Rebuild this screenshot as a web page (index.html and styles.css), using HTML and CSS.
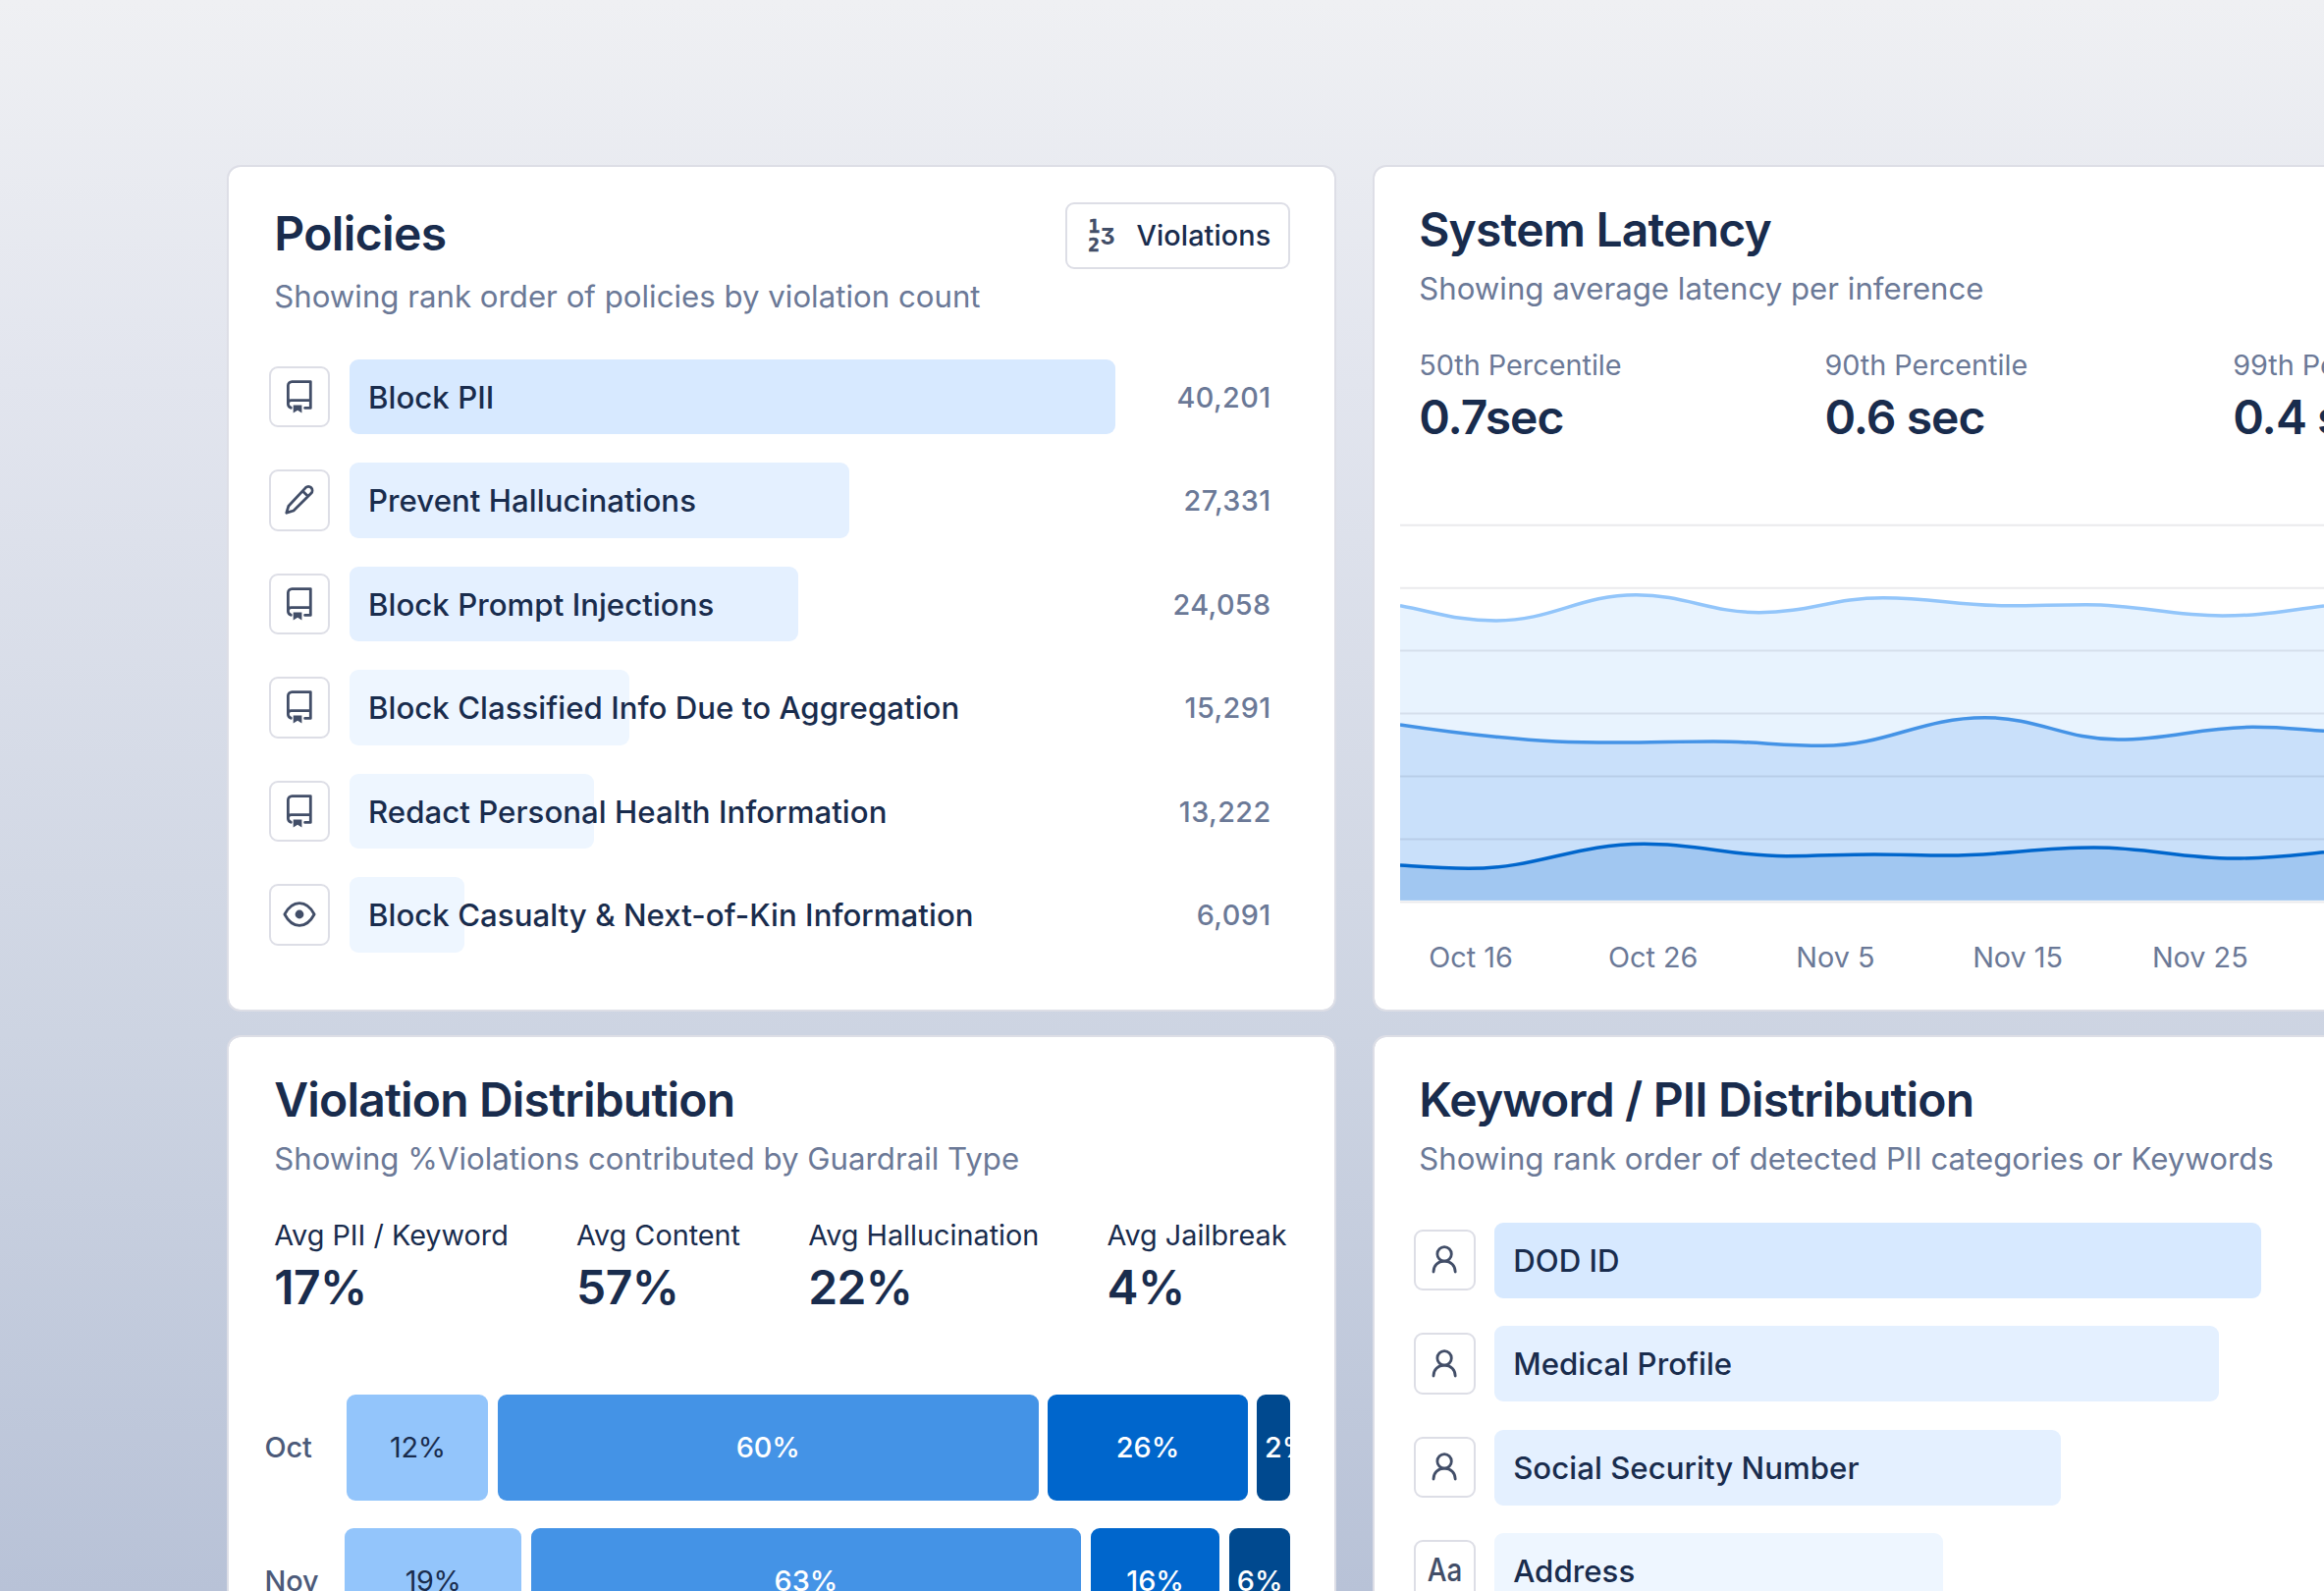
FILE: index.html
```html
<!DOCTYPE html>
<html lang="en">
<head>
<meta charset="utf-8">
<title>Guardrail dashboard</title>
<link rel="stylesheet" href="styles.css">
</head>
<body>
<svg class="sprite" aria-hidden="true">
  <symbol id="i-repo" viewBox="0 0 38 38">
    <path class="ln" d="M10.3 30.2C8.5 29.6 7.4 28 7.4 26.3V7.6a4 4 0 0 1 4-4H30.3V30.4H24.6M7.4 25.8a3.2 3.2 0 0 1 3.2-3.2H30.3"/>
    <path class="fl" d="M12.7 27.4h8.7v8.2l-4.3-2.8-4.4 2.8z"/>
  </symbol>
  <symbol id="i-pencil" viewBox="0 0 38 38">
    <path class="ln" d="M5.8 32.2 7.9 25.2 25.3 6.600a3.900 3.900 0 0 1 5.600 5.600L13 30z M22.200 9.900l5.400 5.400"/>
  </symbol>
  <symbol id="i-eye" viewBox="0 0 38 38">
    <path class="ln" d="M3.9 19C8 11.2 13 7.7 19 7.7S30 11.2 34.1 19C30 26.8 25 30.3 19 30.3S8 26.8 3.9 19z"/>
    <circle class="fl" cx="19" cy="19" r="4.4"/>
  </symbol>
  <symbol id="i-person" viewBox="0 0 38 38">
    <circle class="ln" cx="19.1" cy="12.9" r="7.2"/>
    <path class="ln" d="M8 31C8 24.6 12.5 20.2 19.1 20.2S30.2 24.6 30.2 31"/>
  </symbol>
</svg>

<main class="board">
  <section class="card policies">
    <header class="head">
      <div class="heading">
        <h2 class="title">Policies</h2>
        <p class="sub">Showing rank order of policies by violation count</p>
      </div>
      <button class="btn"><svg class="btn-ico" viewBox="0 0 38 38"><text class="n1" x="5.5" y="16.2">1</text><text class="n1" x="5.3" y="35.4">2</text><text class="n3" x="17.5" y="27.5">3</text></svg><span>Violations</span></button>
    </header>
    <ul class="rank">
      <li class="row"><span class="box"><svg><use href="#i-repo"/></svg></span><span class="track"><span class="bar b1" style="width:780.6px">Block PII</span></span><span class="num">40,201</span></li>
      <li class="row"><span class="box"><svg><use href="#i-pencil"/></svg></span><span class="track"><span class="bar b2" style="width:509.6px">Prevent Hallucinations</span></span><span class="num">27,331</span></li>
      <li class="row"><span class="box"><svg><use href="#i-repo"/></svg></span><span class="track"><span class="bar b2" style="width:457.4px">Block Prompt Injections</span></span><span class="num">24,058</span></li>
      <li class="row"><span class="box"><svg><use href="#i-repo"/></svg></span><span class="track"><span class="bar b3" style="width:284.8px">Block Classified Info Due to Aggregation</span></span><span class="num">15,291</span></li>
      <li class="row"><span class="box"><svg><use href="#i-repo"/></svg></span><span class="track"><span class="bar b3" style="width:248.8px">Redact Personal Health Information</span></span><span class="num">13,222</span></li>
      <li class="row"><span class="box"><svg><use href="#i-eye"/></svg></span><span class="track"><span class="bar b3" style="width:116.8px">Block Casualty &amp; Next-of-Kin Information</span></span><span class="num">6,091</span></li>
    </ul>
  </section>

  <section class="card latency">
    <h2 class="title">System Latency</h2>
    <p class="sub">Showing average latency per inference</p>
    <div class="metrics">
      <div><div class="m-label">50th Percentile</div><div class="m-value">0.7sec</div></div>
      <div><div class="m-label">90th Percentile</div><div class="m-value">0.6 sec</div></div>
      <div><div class="m-label">99th Percentile</div><div class="m-value">0.4 sec</div></div>
    </div>
    <svg class="chart" id="chart" viewBox="0 0 941 387"></svg>
    <div class="axis"><span>Oct 16</span><span>Oct 26</span><span>Nov 5</span><span>Nov 15</span><span>Nov 25</span></div>
  </section>

  <section class="card violations">
    <h2 class="title">Violation Distribution</h2>
    <p class="sub">Showing %Violations contributed by Guardrail Type</p>
    <div class="metrics">
      <div><div class="m-label">Avg PII / Keyword</div><div class="m-value">17%</div></div>
      <div><div class="m-label">Avg Content</div><div class="m-value">57%</div></div>
      <div><div class="m-label">Avg Hallucination</div><div class="m-value">22%</div></div>
      <div><div class="m-label">Avg Jailbreak</div><div class="m-value">4%</div></div>
    </div>
    <div class="stacks">
      <div class="stack"><span class="month">Oct</span><span class="seg s1" style="width:144px">12%</span><span class="seg s2" style="width:551px">60%</span><span class="seg s3" style="width:203.6px">26%</span><span class="seg s4" style="width:34px">2%</span></div>
      <div class="stack"><span class="month">Nov</span><span class="seg s1" style="width:180px">19%</span><span class="seg s2" style="width:560.6px">63%</span><span class="seg s3" style="width:131.7px">16%</span><span class="seg s4" style="width:62.5px">6%</span></div>
    </div>
  </section>

  <section class="card keywords">
    <h2 class="title">Keyword / PII Distribution</h2>
    <p class="sub">Showing rank order of detected PII categories or Keywords</p>
    <ul class="rank">
      <li class="row"><span class="box"><svg><use href="#i-person"/></svg></span><span class="track"><span class="bar b1" style="width:780.6px">DOD ID</span></span></li>
      <li class="row"><span class="box"><svg><use href="#i-person"/></svg></span><span class="track"><span class="bar b2" style="width:737.6px">Medical Profile</span></span></li>
      <li class="row"><span class="box"><svg><use href="#i-person"/></svg></span><span class="track"><span class="bar b2" style="width:577px">Social Security Number</span></span></li>
      <li class="row"><span class="box"><svg viewBox="0 0 38 38"><text class="aa" x="1.8" y="29.2" textLength="35.6" lengthAdjust="spacingAndGlyphs">Aa</text></svg></span><span class="track"><span class="bar b3" style="width:456.6px">Address</span></span></li>
    </ul>
  </section>
</main>
<script src="chart.js"></script>
</body>
</html>
```
FILE: chart.js
```js
// Latency series as [x, y, slope] knots, joined with cubic segments.
const series = [
  { name: 'p50', pts: [[0,83.7,.19],[97.5,99,0],[240.5,72.7,0],[365.7,90.7,0],[492,75.7,0],[618.5,83.7,0],[698.7,82.7,0],[837.5,94,0],[941,84,-.12]] },
  { name: 'p90', pts: [[0,205,.15],[97.5,217.3,.1],[220.8,223,0],[319.4,222,0],[430.5,226.3,0],[595.7,197.7,0],[731.4,220,0],[868.3,207.3,0],[941,211.3,.07]] },
  { name: 'p99', pts: [[0,348,.07],[69.7,351.3,0],[248.5,326.3,0],[393.4,338.7,0],[483,337,0],[557,338,0],[706.7,330,0],[849.8,341,0],[941,334.7,-.1]] },
];
const base = 383.7;
const curve = pts => pts.map(([x, y, m], i) => {
  if (!i) return `M${x} ${y}`;
  const [px, py, pm] = pts[i - 1], h = (x - px) * 0.4;
  return `C${px + h} ${py + pm * h} ${x - h} ${y - m * h} ${x} ${y}`;
}).join('');
const grid = [0, 1, 2, 3, 4, 5, 6].map(i => `<path class="grid" d="M0 ${1.7 + i * 63.95}H941"/>`).join('');
document.getElementById('chart').innerHTML =
  series.map(s => `<path class="area ${s.name}" d="${curve(s.pts)}V${base}H0Z"/>`).join('') + grid +
  series.map(s => `<path class="line ${s.name}" d="${curve(s.pts)}"/>`).join('');
```
FILE: styles.css
```css
* { box-sizing: border-box; }
body {
  margin: 0;
  width: 2367px;
  height: 1620px;
  overflow: hidden;
  background: linear-gradient(180deg, #eff0f3 0%, #e2e5ee 24%, #cdd4e2 65%, #b8c2d7 100%);
  font-family: Inter, "Liberation Sans", sans-serif;
  color: #192c4d;
}
.sprite { display: none; }
.board {
  display: grid;
  grid-template-columns: 1130px 1130px;
  grid-template-rows: 861.6px 861.6px;
  gap: 24.4px 36.6px;
  width: 2367px;
  height: 1620px;
  overflow: hidden;
  padding: 168.4px 0 0 231px;
}
.card {
  border: 2.4px solid #dddee6;
  border-radius: 14px;
  background: #fff;
  background-clip: padding-box;
  padding: 34px 44.6px 0 45.6px;
  overflow: hidden;
}
.policies, .violations { padding-left: 46.2px; }
.title, .sub, .rank { margin: 0; padding: 0; }
.title { font-size: 48px; line-height: 60px; font-weight: 600; letter-spacing: -0.82px; }
.sub { font-size: 31.2px; line-height: 40px; color: #6b7997; margin-top: 10px; white-space: nowrap; letter-spacing: 0.01px; }

.head { display: flex; justify-content: space-between; align-items: flex-start; padding-top: 1.4px; }
.heading { padding-top: 2.6px; }
.heading .title { letter-spacing: -0.6px; }
.heading .sub { margin: 13.8px 0 -0.9px; }
.btn {
  display: flex;
  align-items: center;
  height: 68px;
  width: 229px;
  padding: 1px 18px 0 16px;
  justify-content: space-between;
  border: 2.4px solid #dddee6;
  border-radius: 9px;
  background: #fff;
  color: inherit;
  font: 500 28.8px/36px Inter, sans-serif;
  letter-spacing: 0.1px;
}
.btn-ico { width: 38px; height: 38px; fill: #424e68; }
.n1 { font: 700 19.4px "DejaVu Sans Mono", monospace; stroke: #424e68; stroke-width: 0.6px; }
.n3 { font: 700 23.4px Inter, sans-serif; font-feature-settings: "cv09"; }
.aa { font: 500 33px Inter, sans-serif; fill: #424e68; }

.rank { list-style: none; display: flex; flex-direction: column; gap: 28.7px; margin: 44.3px 0 0 -5px; }
.policies .rank { margin-left: -5.2px; }
.row { display: flex; align-items: center; height: 76.8px; }
.box {
  flex: none;
  display: grid;
  place-items: center;
  width: 62.4px;
  height: 62.4px;
  border: 2.4px solid #dddee6;
  border-radius: 9px;
  margin-right: 19.4px;
}
.box svg { width: 38px; height: 38px; overflow: visible; }
.ln { fill: none; stroke: #424e68; stroke-width: 2.8px; stroke-linecap: round; stroke-linejoin: round; }
.fl { fill: #424e68; }
.track { flex: 1; display: flex; }
.bar {
  height: 76.8px;
  line-height: 78.6px;
  padding-left: 19.2px;
  border-radius: 9px;
  font-size: 31.2px;
  font-weight: 500;
  letter-spacing: 0.04px;
  white-space: nowrap;
}
.b1 { background: #d7e9ff; }
.b2 { background: #e4f0ff; }
.b3 { background: #eef6ff; }
.num { font-size: 28.8px; font-weight: 500; letter-spacing: 0.4px; color: #6b7997; margin-right: 19.8px; padding-top: 1px; }
.keywords .rank { margin-top: 44.4px; }

.metrics { display: flex; margin-top: 39.3px; }
.m-label { font-size: 28.8px; line-height: 36px; white-space: nowrap; }
.m-value { font-size: 48px; line-height: 60px; font-weight: 600; margin-top: 5px; white-space: nowrap; letter-spacing: -0.6px; }
.latency .m-label { color: #6b7997; }
.latency .m-value { letter-spacing: -0.96px; }
.latency .metrics > div { flex: none; width: 413.2px; }
.latency .metrics > div:nth-child(2) { width: 415.8px; }
.violations .metrics { gap: 69.2px; }

.chart { display: block; width: 941px; height: 387px; margin: 78.2px 0 0 -19.7px; }
.area.p50 { fill: #e8f3fe; }
.area.p90 { fill: #c9e0fa; }
.area.p99 { fill: #a1c7f1; }
.line { fill: none; stroke-width: 3.5px; }
.line.p50 { stroke: #92c5fa; }
.line.p90 { stroke: #4493e6; }
.line.p99 { stroke: #0066cc; }
.grid { stroke: rgba(20, 25, 50, .09); stroke-width: 2px; }
.axis { display: flex; margin: 37px 0 0 -40px; color: #6b7997; font-size: 28.8px; line-height: 36px; }
.axis span { flex: none; width: 185.7px; text-align: center; }

.stacks { display: flex; flex-direction: column; gap: 28.9px; margin: 79.3px 0 0 -9.8px; }
.stack { display: flex; justify-content: flex-end; gap: 9.5px; height: 107.6px; line-height: 108.4px; font-size: 28.8px; font-weight: 500; }
.month { margin-right: auto; color: #4c5a79; }
.seg { flex: none; border-radius: 9px; padding: 0 7.6px; text-align: center; color: #fff; overflow: hidden; }
.s1 { background: #93c5fb; color: #192c4d; font-weight: 400; line-height: 107px; letter-spacing: -0.3px; }
.s2 { background: #4493e6; }
.s3 { background: #0066cc; }
.s4 { background: #00498f; }
```
